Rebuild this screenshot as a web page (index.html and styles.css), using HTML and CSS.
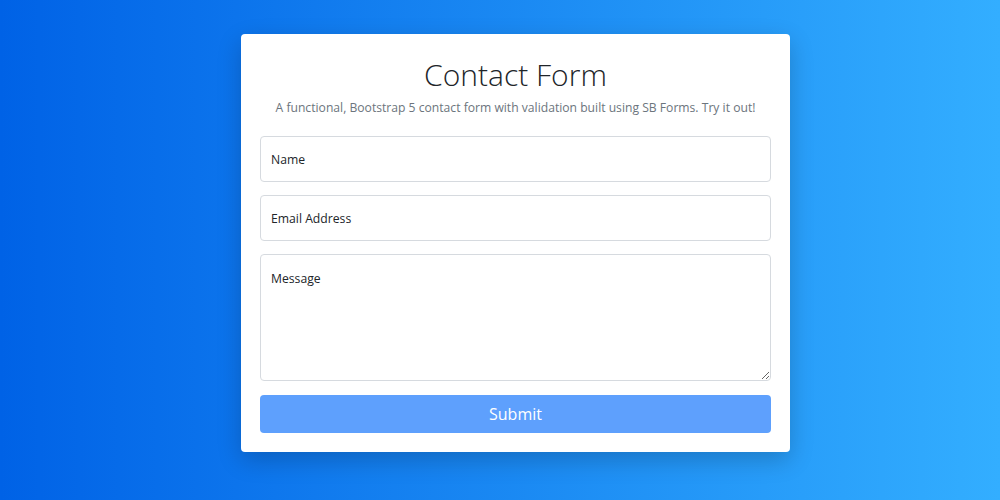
FILE: index.html
```html
<!DOCTYPE html>
<html lang="en">
<head>
<meta charset="utf-8">
<title>Contact Form</title>
<link rel="stylesheet" href="styles.css">
</head>
<body>
<main class="page">
  <section class="card">
    <h1 class="title">Contact Form</h1>
    <p class="lead">A functional, Bootstrap 5 contact form with validation built using SB Forms. Try it out!</p>
    <form class="form">
      <input class="field" type="text" placeholder="Name">
      <input class="field" type="email" placeholder="Email Address">
      <textarea class="field area" placeholder="Message"></textarea>
      <button class="submit" type="button" disabled>Submit</button>
    </form>
  </section>
</main>
</body>
</html>
```
FILE: styles.css
```css
html, body {
  margin: 0;
  height: 100%;
}
body {
  background: linear-gradient(to right, #0062E6, #33AEFF);
  font-family: "Open Sans", "Noto Sans", sans-serif;
  color: #212529;
}
.page {
  display: flex;
  justify-content: center;
  padding: 34px 0 0 31px;
}
.card {
  width: 511px;
  background: #fff;
  border-radius: 4px;
  padding: 19px;
  box-shadow: 0 8px 24px rgba(0, 0, 0, 0.2);
}
.title {
  margin: 2px 0 0;
  text-align: center;
  font-weight: 300;
  font-size: 30px;
  line-height: 40px;
  color: #212529;
}
.lead {
  margin: 3px 0 18px;
  text-align: center;
  font-size: 12.15px;
  line-height: 20px;
  color: #6c757d;
  white-space: nowrap;
}
.form {
  display: flex;
  flex-direction: column;
  gap: 13px;
}
.field {
  box-sizing: border-box;
  width: 100%;
  height: 46px;
  border: 1px solid #d6dadf;
  border-radius: 4px;
  padding: 0 10px;
  font-family: inherit;
  font-size: 12.2px;
  color: #212529;
  background: #fff;
  margin: 0;
}
.field::placeholder {
  color: #212529;
  opacity: 1;
}
.area {
  height: 127px;
  padding: 15px 10px;
  resize: vertical;
  display: block;
}
.submit {
  height: 38px;
  border: none;
  border-radius: 4px;
  background: #5ea0fd;
  color: #fff;
  font-family: inherit;
  font-size: 16px;
  margin-top: 1px;
}
```
